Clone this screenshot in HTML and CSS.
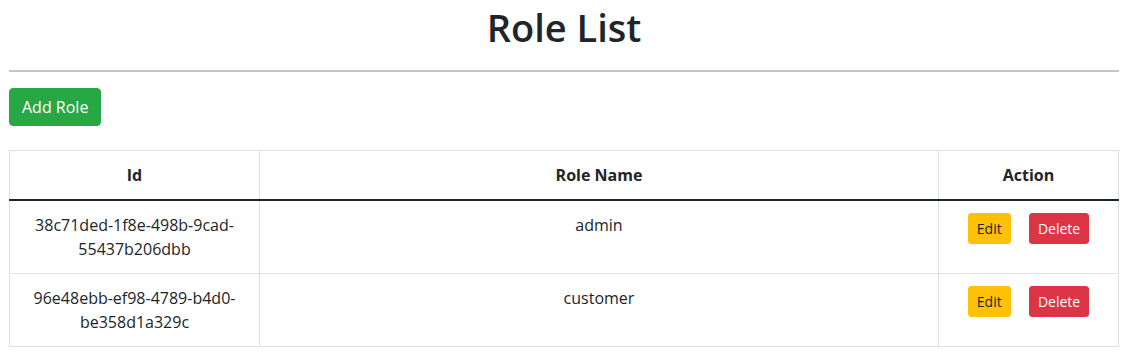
FILE: index.html
```html
<!DOCTYPE html>
<html lang="en">
<head>
  <meta charset="UTF-8" />
  <meta name="viewport" content="width=device-width, initial-scale=1.0"/>
  <title>Role List</title>
  <link rel="stylesheet" href="styles.css">
</head>
<body>
  <div class="container">
    <h1>Role List</h1>
    <hr>

    <div class="toolbar">
      <button class="btn btn-success">Add Role</button>
    </div>

    <table class="role-table">
      <thead>
        <tr>
          <th class="col-id">Id</th>
          <th class="col-name">Role Name</th>
          <th class="col-action">Action</th>
        </tr>
      </thead>
      <tbody>
        <tr>
          <td>38c71ded-1f8e-498b-9cad-55437b206dbb</td>
          <td>admin</td>
          <td>
            <button class="btn btn-sm btn-warning">Edit</button>
            <button class="btn btn-sm btn-danger">Delete</button>
          </td>
        </tr>
        <tr>
          <td>96e48ebb-ef98-4789-b4d0-be358d1a329c</td>
          <td>customer</td>
          <td>
            <button class="btn btn-sm btn-warning">Edit</button>
            <button class="btn btn-sm btn-danger">Delete</button>
          </td>
        </tr>
      </tbody>
    </table>
  </div>
</body>
</html>
```

FILE: styles.css
```css
body {
  font-family: "Open Sans", "Noto Sans", Arial, sans-serif;
  font-size: 16px;
  line-height: 1.5;
  color: #212529;
  background: #fff;
  margin: 0;
}
.container {
  padding: 0 7px 0 9px;
}
h1 {
  font-size: 38px;
  font-weight: 600;
  line-height: 50px;
  text-align: center;
  margin: 0 0 20px;
  padding-top: 2px;
}
hr {
  border: none;
  border-top: 2px solid #c6c6c6;
  margin: -2px 0 16px;
}
.toolbar {
  margin-bottom: 24px;
}
.btn {
  font-family: inherit;
  font-size: 16px;
  line-height: 24px;
  padding: 6px 12px;
  border: 1px solid transparent;
  border-radius: 4px;
  cursor: pointer;
}
.btn-sm {
  font-size: 14px;
  line-height: 21px;
  padding: 4px 8px;
  border-radius: 3px;
}
.btn-success {
  background: #28a745;
  border-color: #28a745;
  color: #fff;
}
.btn-warning {
  background: #ffc107;
  border-color: #ffc107;
  color: #212529;
  margin-right: 14px;
}
.btn-danger {
  background: #dc3545;
  border-color: #dc3545;
  color: #fff;
}
.role-table {
  width: 100%;
  border-collapse: collapse;
  text-align: center;
}
.role-table th,
.role-table td {
  border: 1px solid #dee2e6;
  padding: 12px;
  vertical-align: top;
}
.role-table th {
  font-weight: 700;
  border-bottom: 2px solid #212529;
}
.col-id {
  width: 225px;
}
.col-action {
  width: 155px;
}
```
